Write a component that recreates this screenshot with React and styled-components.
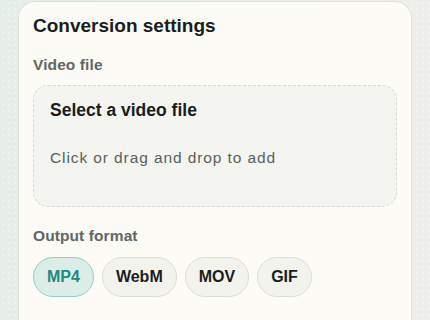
import React, { useState } from "react";
import styled, { createGlobalStyle } from "styled-components";

const GlobalStyle = createGlobalStyle`
  html, body { margin: 0; padding: 0; }
  body {
    width: 430px;
    height: 320px;
    overflow: hidden;
    font-family: "Liberation Sans", Arial, sans-serif;
    background-color: #eaeeea;
    background-image:
      radial-gradient(rgba(255,255,255,0.35) 0.7px, transparent 1px),
      linear-gradient(90deg, #e4efea 0%, #e8efeb 45%, #eeeeea 100%);
    background-size: 6px 6px, 100% 100%;
  }
`;

const Page = styled.div`
  padding: 1px 18px 0 18px;
  height: 320px;
  box-sizing: border-box;
`;

const Card = styled.section`
  background: #fcfbf6;
  border: 1px solid #e1e0d8;
  border-bottom: 0;
  border-radius: 17px 17px 0 0;
  padding: 12px 14px 0 14px;
  height: 319px;
  box-sizing: border-box;
  display: flex;
  flex-direction: column;
`;

const Title = styled.h2`
  margin: 0;
  font-size: 19px;
  line-height: 24px;
  font-weight: 700;
  color: #1b1d1c;
`;

const Label = styled.div`
  margin-top: ${(p) => p.$mt}px;
  font-size: 15.5px;
  line-height: 20px;
  font-weight: 700;
  color: #616763;
  letter-spacing: 0.1px;
`;

const DropZone = styled.div`
  margin-top: 10px;
  height: 122px;
  box-sizing: border-box;
  border: 1px dashed #d6d8d0;
  border-radius: 15px;
  background: #f4f5f0;
  padding: 13px 16px;
  display: flex;
  flex-direction: column;
  cursor: pointer;
`;

const DropTitle = styled.div`
  font-size: 17.5px;
  line-height: 22px;
  font-weight: 700;
  color: #1b1d1c;
`;

const DropHint = styled.div`
  margin-top: 27px;
  font-size: 15.5px;
  line-height: 20px;
  color: #5a5f5c;
  letter-spacing: 0.9px;
`;

const Chips = styled.div`
  margin-top: 11px;
  display: flex;
  gap: 8px;
`;

const Chip = styled.button`
  height: 40px;
  box-sizing: border-box;
  padding: 0 13px;
  border-radius: 20px;
  font-family: inherit;
  font-size: 16px;
  font-weight: 700;
  border: 1px solid ${(p) => (p.$active ? "#8fcfc5" : "#dedcd4")};
  background: ${(p) => (p.$active ? "#dcede8" : "#f3f3ee")};
  color: ${(p) => (p.$active ? "#1d8a80" : "#1b1d1c")};
  cursor: pointer;
`;

const formats = ["MP4", "WebM", "MOV", "GIF"];

export default function App() {
  const [fmt, setFmt] = useState("MP4");
  return (
    <>
      <GlobalStyle />
      <Page>
        <Card>
          <Title>Conversion settings</Title>
          <Label $mt={17}>Video file</Label>
          <DropZone>
            <DropTitle>Select a video file</DropTitle>
            <DropHint>Click or drag and drop to add</DropHint>
          </DropZone>
          <Label $mt={19}>Output format</Label>
          <Chips>
            {formats.map((f) => (
              <Chip key={f} $active={f === fmt} onClick={() => setFmt(f)}>
                {f}
              </Chip>
            ))}
          </Chips>
        </Card>
      </Page>
    </>
  );
}
